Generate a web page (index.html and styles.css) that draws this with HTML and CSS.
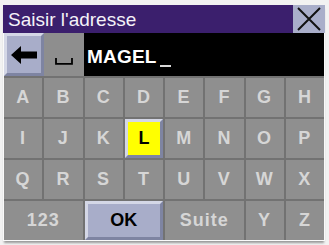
FILE: index.html
```html
<!DOCTYPE html>
<html>
<head>
<meta charset="utf-8">
<link rel="stylesheet" href="styles.css">
</head>
<body>
<div class="frame">
  <div class="title">
    <span class="title-text">Saisir l'adresse</span>
    <div class="close">
      <svg width="26" height="24" viewBox="0 0 26 24"><path d="M2 1 L24 23 M24 1 L2 23" stroke="#111" stroke-width="2" fill="none"/></svg>
    </div>
  </div>
  <div class="body">
    <div class="entry">
      <div class="bevel back">
        <svg width="26" height="18" viewBox="0 0 26 18"><path d="M0 9 L10 0 L10 5.5 L26 5.5 L26 12.5 L10 12.5 L10 18 Z" fill="#000"/></svg>
      </div>
      <div class="space">
        <svg width="18" height="7" viewBox="0 0 18 7"><path d="M1 0 V5.8 H17 V0" stroke="#000" stroke-width="1.8" fill="none"/></svg>
      </div>
      <div class="field"><span class="typed">MAGEL</span><span class="cursor"></span></div>
    </div>
    <div class="keys">
      <div class="key">A</div><div class="key">B</div><div class="key">C</div><div class="key">D</div>
      <div class="key">E</div><div class="key">F</div><div class="key">G</div><div class="key">H</div>
      <div class="key">I</div><div class="key">J</div><div class="key">K</div><div class="key sel"><span>L</span></div>
      <div class="key">M</div><div class="key">N</div><div class="key">O</div><div class="key">P</div>
      <div class="key">Q</div><div class="key">R</div><div class="key">S</div><div class="key">T</div>
      <div class="key">U</div><div class="key">V</div><div class="key">W</div><div class="key">X</div>
      <div class="key wide">123</div><div class="key wide ok"><span>OK</span></div><div class="key wide">Suite</div><div class="key">Y</div><div class="key">Z</div>
    </div>
  </div>
</div>
</body>
</html>
```
FILE: styles.css
```css
html, body { margin: 0; padding: 0; }
body {
  width: 329px; height: 245px; overflow: hidden;
  background: #f2f2f2;
  font-family: "Liberation Sans", Arial, sans-serif;
}
.frame {
  margin: 5px 0 0 3px;
  width: 322px;
  box-shadow: 0 3px 2px -1px #9a9a9a;
}
.title {
  height: 28px;
  background: #3b1f6d;
  display: flex;
  align-items: center;
  justify-content: space-between;
}
.title-text {
  color: #f4f2f8;
  font-size: 19px;
  padding-left: 5px;
  padding-top: 2px;
}
.close {
  width: 32px; height: 28px;
  background: #a9aeca;
  display: flex; align-items: center; justify-content: center;
}
.body {
  border: 1px solid #fafafa;
  border-top: none;
  background: #707070;
}
.entry {
  display: flex;
  height: 43px;
  background: #000;
}
.bevel {
  box-sizing: border-box;
  border: 3px solid;
  border-color: #d4d7e6 #7e84a2 #7e84a2 #d4d7e6;
}
.back {
  width: 40px;
  background: #a8adc9;
  display: flex; align-items: center; justify-content: center;
  padding-top: 1px;
}
.space {
  width: 40px;
  background: #8e8e8e;
  display: flex; align-items: center; justify-content: center;
  padding-top: 14px; box-sizing: border-box;
}
.field {
  flex: 1;
  background: #000;
  display: flex; align-items: center;
  padding-left: 3px;
  padding-top: 4px;
}
.typed {
  color: #fff;
  font-weight: bold;
  font-size: 19px;
  letter-spacing: 0.2px;
}
.cursor {
  width: 11px; height: 2px; background: #d8d8d8;
  align-self: flex-end; margin: 0 0 9px 3px;
}
.keys {
  display: grid;
  grid-template-columns: repeat(8, 1fr);
  grid-auto-rows: 39px;
  gap: 2px;
  padding-top: 2px;
  background: #727272;
}
.key {
  background: #8f8f8f;
  color: #d6d6d6;
  font-weight: bold;
  font-size: 18px;
  letter-spacing: 1px;
  display: flex; align-items: center; justify-content: center;
}
.wide { grid-column: span 2; }
.sel, .ok {
  box-sizing: border-box;
  border: 3px solid;
  border-color: #d4d7e6 #7e84a2 #7e84a2 #d4d7e6;
  color: #000;
  letter-spacing: 0;
}
.sel { background: #ffff00; }
.ok { background: #a8adc9; }
```
